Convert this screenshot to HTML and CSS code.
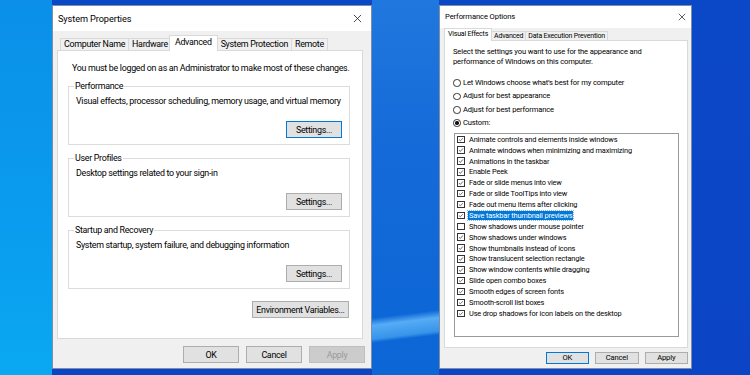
FILE: index.html
```html
<!DOCTYPE html>
<html lang="en">
<head>
<meta charset="utf-8">
<title>System Properties</title>
<link rel="stylesheet" href="styles.css">
</head>
<body>
<div class="desktop">
  <section class="win sys">
    <header class="titlebar">
      <span class="title">System Properties</span>
      <svg class="close" viewBox="0 0 10 10"><path d="M1 1L9 9M9 1L1 9"/></svg>
    </header>
    <nav class="tabs">
      <span class="tab">Computer Name</span>
      <span class="tab">Hardware</span>
      <span class="tab active">Advanced</span>
      <span class="tab">System Protection</span>
      <span class="tab">Remote</span>
    </nav>
    <div class="panel">
      <p class="intro">You must be logged on as an Administrator to make most of these changes.</p>
      <fieldset class="group">
        <legend>Performance</legend>
        <p class="desc">Visual effects, processor scheduling, memory usage, and virtual memory</p>
        <div class="row"><button class="btn default">Settings...</button></div>
      </fieldset>
      <fieldset class="group">
        <legend>User Profiles</legend>
        <p class="desc">Desktop settings related to your sign-in</p>
        <div class="row"><button class="btn">Settings...</button></div>
      </fieldset>
      <fieldset class="group">
        <legend>Startup and Recovery</legend>
        <p class="desc">System startup, system failure, and debugging information</p>
        <div class="row"><button class="btn">Settings...</button></div>
      </fieldset>
      <div class="row env"><button class="btn wide">Environment Variables...</button></div>
    </div>
    <footer class="footer">
      <button class="btn">OK</button>
      <button class="btn">Cancel</button>
      <button class="btn disabled">Apply</button>
    </footer>
  </section>

  <section class="win perf">
    <header class="titlebar">
      <span class="title">Performance Options</span>
      <svg class="close" viewBox="0 0 10 10"><path d="M1 1L9 9M9 1L1 9"/></svg>
    </header>
    <nav class="tabs">
      <span class="tab active">Visual Effects</span>
      <span class="tab">Advanced</span>
      <span class="tab">Data Execution Prevention</span>
    </nav>
    <div class="panel">
      <p class="intro">Select the settings you want to use for the appearance and performance of Windows on this computer.</p>
      <div class="radios">
        <div class="radio"><span class="rb"></span>Let Windows choose what’s best for my computer</div>
        <div class="radio"><span class="rb"></span>Adjust for best appearance</div>
        <div class="radio"><span class="rb"></span>Adjust for best performance</div>
        <div class="radio"><span class="rb on"></span>Custom:</div>
      </div>
      <div class="listbox">
        <div class="item"><span class="cb on"></span><span class="lbl">Animate controls and elements inside windows</span></div>
        <div class="item"><span class="cb on"></span><span class="lbl">Animate windows when minimizing and maximizing</span></div>
        <div class="item"><span class="cb on"></span><span class="lbl">Animations in the taskbar</span></div>
        <div class="item"><span class="cb on"></span><span class="lbl">Enable Peek</span></div>
        <div class="item"><span class="cb on"></span><span class="lbl">Fade or slide menus into view</span></div>
        <div class="item"><span class="cb on"></span><span class="lbl">Fade or slide ToolTips into view</span></div>
        <div class="item"><span class="cb on"></span><span class="lbl">Fade out menu items after clicking</span></div>
        <div class="item"><span class="cb on"></span><span class="lbl sel">Save taskbar thumbnail previews</span></div>
        <div class="item"><span class="cb"></span><span class="lbl">Show shadows under mouse pointer</span></div>
        <div class="item"><span class="cb on"></span><span class="lbl">Show shadows under windows</span></div>
        <div class="item"><span class="cb on"></span><span class="lbl">Show thumbnails instead of icons</span></div>
        <div class="item"><span class="cb on"></span><span class="lbl">Show translucent selection rectangle</span></div>
        <div class="item"><span class="cb on"></span><span class="lbl">Show window contents while dragging</span></div>
        <div class="item"><span class="cb on"></span><span class="lbl">Slide open combo boxes</span></div>
        <div class="item"><span class="cb on"></span><span class="lbl">Smooth edges of screen fonts</span></div>
        <div class="item"><span class="cb on"></span><span class="lbl">Smooth-scroll list boxes</span></div>
        <div class="item"><span class="cb on"></span><span class="lbl">Use drop shadows for icon labels on the desktop</span></div>
      </div>
    </div>
    <footer class="footer">
      <button class="btn default">OK</button>
      <button class="btn">Cancel</button>
      <button class="btn">Apply</button>
    </footer>
  </section>
</div>
</body>
</html>
```

FILE: styles.css
```css
* { box-sizing: border-box; }

html, body {
  margin: 0;
  width: 750px;
  height: 375px;
  overflow: hidden;
}

body {
  font-family: Roboto, "Liberation Sans", sans-serif;
  color: #000;
  background:
    linear-gradient(173deg, transparent 0 83%, rgba(110,195,255,.75) 85%, rgba(90,185,250,.55) 88.5%, transparent 89.5%) 372px 0 / 67px 100% no-repeat,
    linear-gradient(180deg, #2078de 0%, #146ad8 40%, #0c66d6 100%) 372px 0 / 67px 100% no-repeat,
    linear-gradient(180deg, #0b8fe8 0%, #0a9bee 55%, #0aa8f2 100%) 0 0 / 52px 100% no-repeat,
    linear-gradient(180deg, #0b48c8 0%, #0b45c5 100%);
}

.desktop {
  display: flex;
  gap: 67px;
  padding: 5px 0 0 52px;
}

.win {
  display: flex;
  flex-direction: column;
  height: 364px;
  background: #f0f0f0;
  border: 1px solid #7d8fa6;
}

.titlebar {
  display: flex;
  align-items: center;
  justify-content: space-between;
  background: #fff;
}

.title { white-space: nowrap; }

.close {
  fill: none;
  stroke: #222;
  stroke-width: 0.9;
}

.tabs {
  display: flex;
  align-items: flex-end;
}

.tab {
  background: #f0f0f0;
  border: 1px solid #d9d9d9;
  border-bottom: none;
  margin-right: -1px;
  white-space: nowrap;
  text-align: center;
}

.tab.active {
  background: #fff;
  position: relative;
  z-index: 1;
}

.panel {
  background: #fff;
  border: 1px solid #d9d9d9;
}

p { margin: 0; }

.btn {
  font: inherit;
  letter-spacing: inherit;
  color: #000;
  background: #e1e1e1;
  border: 1px solid #adadad;
  padding: 0;
  text-align: center;
  white-space: nowrap;
}

.btn.default { border-color: #0078d7; }

.btn.disabled {
  background: #cccccc;
  border-color: #bfbfbf;
  color: #9a9a9a;
}

.row {
  display: flex;
  justify-content: flex-end;
}

.footer {
  display: flex;
  justify-content: flex-end;
}

/* ---------- System Properties ---------- */

.sys {
  width: 320px;
  font-size: 8.9px;
  letter-spacing: -0.3px;
  line-height: 12px;
}

.sys .titlebar {
  height: 25px;
  padding: 0 9px 0 5px;
}

.sys .title { font-size: 9.2px; letter-spacing: -0.1px; }

.sys .close { width: 9px; height: 9px; }

.sys .tabs {
  height: 19px;
  padding-left: 7px;
}

.sys .tab {
  height: 12px;
  line-height: 11px;
  padding: 0 3px;
}

.sys .tab.active {
  height: 16px;
  line-height: 13px;
  margin: 0 -1px -1px -2px;
  padding: 0 5px;
}

.sys .panel {
  height: 289px;
  margin: 0 8px 0 4px;
  padding: 11px 12px 0 10px;
}

.sys .intro { padding-left: 4px; white-space: nowrap; }

.sys .group {
  margin: 7px 0 0;
  padding: 3px 7px 6px;
  border: 1px solid #dcdcdc;
}

.sys .group:first-of-type { margin-top: 6px; }

.sys .group legend {
  padding: 0 1px;
  margin-left: -2px;
}

.sys .desc { margin-bottom: 14px; white-space: nowrap; }

.sys .btn {
  width: 56px;
  height: 17px;
}

.sys .env { margin-top: 12px; }

.sys .btn.wide { width: 97px; margin-right: 1px; }

.sys .footer {
  padding: 7px 6px 0 0;
  gap: 7px;
}

/* ---------- Performance Options ---------- */

.perf {
  width: 253px;
  font-size: 7.6px;
  letter-spacing: -0.15px;
  line-height: 10px;
}

.perf .titlebar {
  height: 22px;
  padding: 0 5px 0 5px;
}

.perf .title { font-size: 7.6px; letter-spacing: -0.1px; }

.perf .close { width: 8px; height: 8px; }

.perf .tabs {
  height: 12px;
  padding-left: 4px;
}

.perf .tab {
  height: 9px;
  line-height: 9px;
  padding: 0 2px;
  font-size: 7px;
  letter-spacing: -0.2px;
}

.perf .tab.active {
  height: 13px;
  line-height: 11px;
  margin: 0 -1px -1px 0;
  padding: 0 3px;
}

.perf .panel {
  height: 308px;
  margin: 0 3px 0 4px;
  padding: 6px 8px 0 8px;
}

.radios { margin-top: 9.3px; }

.radio {
  display: flex;
  align-items: center;
  height: 13.4px;
  white-space: nowrap;
}

.rb {
  flex: none;
  width: 7.5px;
  height: 7.5px;
  margin-right: 2.5px;
  border: 1px solid #333;
  border-radius: 50%;
  background: #fff;
  display: flex;
  align-items: center;
  justify-content: center;
}

.rb.on::after {
  content: "";
  width: 3.5px;
  height: 3.5px;
  border-radius: 50%;
  background: #111;
}

.listbox {
  margin: 3px 0 0 1px;
  height: 204px;
  background: #fff;
  border: 1px solid #9a9a9a;
}

.item {
  display: flex;
  align-items: center;
  height: 10.875px;
  padding-left: 2px;
  white-space: nowrap;
  font-size: 7.4px;
}

.cb {
  flex: none;
  width: 7.5px;
  height: 7.5px;
  margin-right: 3.5px;
  border: 1px solid #333;
  background: #fff;
}

.cb.on {
  background: #fff url("data:image/svg+xml,%3Csvg xmlns='http://www.w3.org/2000/svg' viewBox='0 0 8 8'%3E%3Cpath d='M1.3 4.1L3.1 5.9L6.6 1.9' fill='none' stroke='%23222' stroke-width='0.9'/%3E%3C/svg%3E") center / 100% 100% no-repeat;
}

.lbl { line-height: 9px; padding: 0 1px; }

.lbl.sel {
  background: #0078d7;
  color: #fff;
  outline: 1px dotted #7fb8ea;
}

.perf .footer {
  padding: 4px 3px 0 0;
  gap: 6px;
}

.perf .btn {
  width: 43.5px;
  height: 12px;
  line-height: 10px;
}
```
